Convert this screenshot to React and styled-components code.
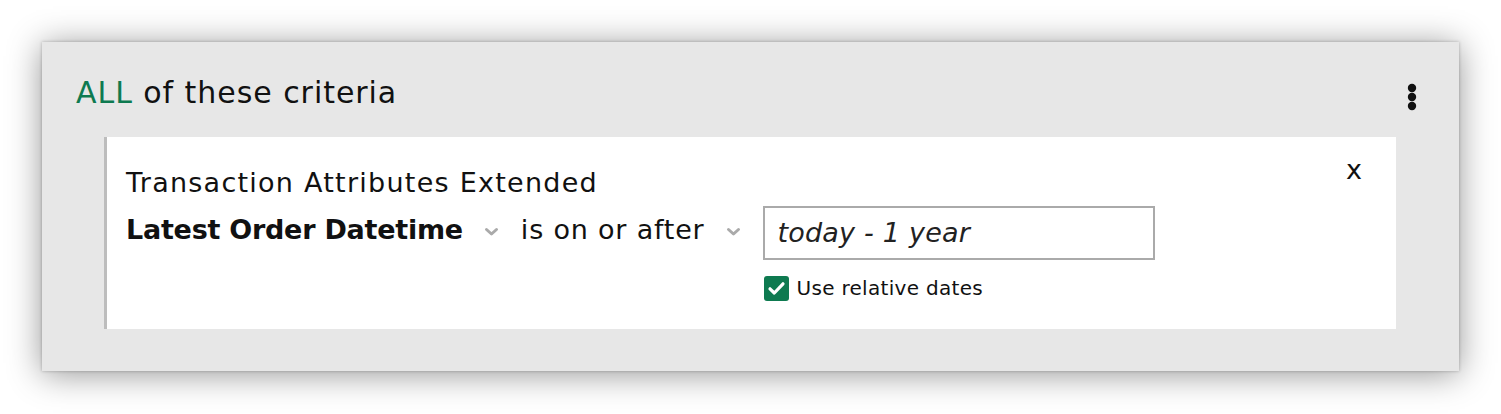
import React from "react";
import styled, { createGlobalStyle } from "styled-components";

const GlobalStyle = createGlobalStyle`
  html, body {
    margin: 0;
    padding: 0;
    background: #ffffff;
  }
  body {
    font-family: "DejaVu Sans", "Open Sans", sans-serif;
    color: #111;
  }
`;

const green = "#0e7a50";

const Chevron = () => (
  <ChevronIcon width="15" height="10" viewBox="0 0 15 10">
    <path
      d="M2.5 2.5 L7.5 7 L12.5 2.5"
      fill="none"
      stroke="#aaaaaa"
      strokeWidth="3"
      strokeLinecap="round"
      strokeLinejoin="round"
    />
  </ChevronIcon>
);

const Kebab = () => (
  <svg width="10" height="30" viewBox="0 0 10 30">
    <circle cx="5" cy="5" r="4.2" fill="#111" />
    <circle cx="5" cy="14" r="4.2" fill="#111" />
    <circle cx="5" cy="23" r="4.2" fill="#111" />
  </svg>
);

const Check = () => (
  <svg width="21" height="21" viewBox="0 0 21 21">
    <path
      d="M4 10.8 L8.3 15 L17 5.8"
      fill="none"
      stroke="#fff"
      strokeWidth="3.2"
      strokeLinecap="round"
      strokeLinejoin="round"
    />
  </svg>
);

export default function App() {
  return (
    <>
      <GlobalStyle />
      <Page>
        <Group>
          <GroupHeader>
            <Heading>
              <Match>ALL</Match> of these criteria
            </Heading>
            <MenuButton aria-label="menu">
              <Kebab />
            </MenuButton>
          </GroupHeader>
          <Criterion>
            <Close>x</Close>
            <Title>Transaction Attributes Extended</Title>
            <ConditionRow>
              <Select>
                <Field bold>Latest Order Datetime</Field>
                <Chevron />
              </Select>
              <Select>
                <Field>is on or after</Field>
                <Chevron />
              </Select>
              <ValueColumn>
                <ValueInput>today - 1 year</ValueInput>
                <CheckRow>
                  <CheckBox>
                    <Check />
                  </CheckBox>
                  <CheckLabel>Use relative dates</CheckLabel>
                </CheckRow>
              </ValueColumn>
            </ConditionRow>
          </Criterion>
        </Group>
      </Page>
    </>
  );
}

const Page = styled.div`
  padding: 42px 42px 43px 42px;
`;

const Group = styled.div`
  width: 1417px;
  height: 329px;
  box-sizing: border-box;
  background: #e7e7e7;
  box-shadow: 0 0 3px rgba(0, 0, 0, 0.25), 0 3px 32px rgba(0, 0, 0, 0.42);
  padding: 33px 42px 0 34px;
`;

const GroupHeader = styled.div`
  display: flex;
  justify-content: space-between;
  align-items: flex-start;
  height: 62px;
`;

const Heading = styled.div`
  font-size: 30px;
  line-height: 36px;
  letter-spacing: 0.95px;
  color: #111;
`;

const Match = styled.span`
  color: ${green};
`;

const MenuButton = styled.div`
  padding-top: 8px;
`;

const Criterion = styled.div`
  position: relative;
  margin-left: 28px;
  width: 1292px;
  height: 192px;
  box-sizing: border-box;
  background: #fff;
  border-left: 3px solid #bdbdbd;
  padding: 30px 0 0 19px;
`;

const Close = styled.div`
  position: absolute;
  top: 17px;
  right: 34px;
  font-size: 27px;
  line-height: 32px;
  color: #111;
`;

const Title = styled.div`
  font-size: 27px;
  line-height: 32px;
  letter-spacing: 1.25px;
  color: #111;
`;

const ConditionRow = styled.div`
  display: flex;
  align-items: flex-start;
  margin-top: 7px;
`;

const Select = styled.div`
  display: flex;
  align-items: center;
  gap: 21px;
  margin-right: 22px;
  height: 48px;
`;

const ChevronIcon = styled.svg`
  margin-top: 4px;
`;

const Field = styled.div`
  font-size: 27px;
  line-height: 48px;
  font-weight: ${(p) => (p.bold ? 700 : 400)};
  letter-spacing: ${(p) => (p.bold ? "-0.25px" : "0.8px")};
  color: #111;
`;

const ValueColumn = styled.div`
  display: flex;
  flex-direction: column;
`;

const ValueInput = styled.div`
  width: 392px;
  height: 54px;
  box-sizing: border-box;
  border: 2px solid #aaaaaa;
  padding: 0 13px;
  font-size: 27px;
  font-style: italic;
  line-height: 50px;
  letter-spacing: 0.2px;
  color: #222;
`;

const CheckRow = styled.div`
  display: flex;
  align-items: center;
  gap: 8px;
  margin-top: 16px;
  padding-left: 1px;
`;

const CheckBox = styled.div`
  width: 25px;
  height: 25px;
  border-radius: 3px;
  background: ${green};
  display: flex;
  align-items: center;
  justify-content: center;
`;

const CheckLabel = styled.div`
  font-size: 20px;
  line-height: 25px;
  letter-spacing: 0.3px;
  color: #111;
`;
